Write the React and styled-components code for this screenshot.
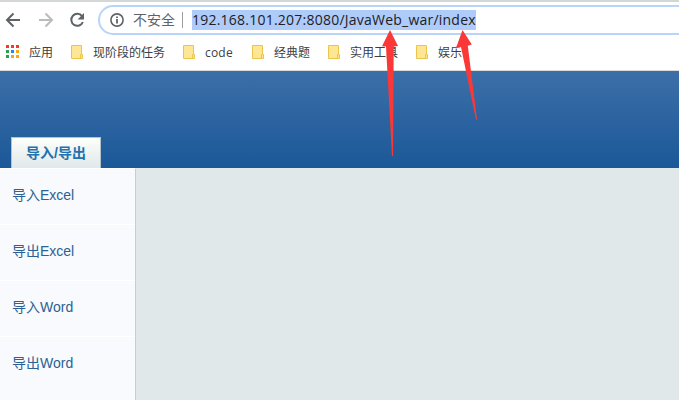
import React from "react";
import styled, { createGlobalStyle } from "styled-components";

const GlobalStyle = createGlobalStyle`
  * { box-sizing: border-box; }
  body { margin: 0; overflow: hidden; background: #fff; }
`;

const Window = styled.div`
  position: relative;
  width: 679px;
  height: 400px;
  display: flex;
  flex-direction: column;
  overflow: hidden;
  font-family: "Open Sans", "Noto Sans CJK SC", sans-serif;
`;

const TabStrip = styled.div`
  height: 2px;
  flex: none;
  background: #d3d7d5;
`;

const Toolbar = styled.div`
  height: 33px;
  flex: none;
  display: flex;
  padding: 3px 0 0 5px;
`;

const NavButton = styled.span`
  width: 16px;
  height: 30px;
  margin-right: ${(p) => p.$gap}px;
  display: flex;
  align-items: center;
  justify-content: center;
  flex: none;
  color: ${(p) => (p.$disabled ? "#bbbbbb" : "#5f6368")};
`;

const AddressBar = styled.div`
  width: 640px;
  height: 30px;
  flex: none;
  border: 2px solid #b8d4f8;
  border-radius: 15px;
  display: flex;
  align-items: center;
  padding-left: 10px;
`;

const Security = styled.span`
  width: 43px;
  margin-left: 9px;
  font-size: 14px;
  line-height: 20px;
  white-space: nowrap;
  color: #5f6368;
`;

const Divider = styled.span`
  width: 1px;
  height: 16px;
  margin: 0 9px 0 6px;
  background: #9b9da0;
`;

const Url = styled.span`
  width: 284px;
  height: 20px;
  background: #aecbfa;
  color: #202124;
  font-size: 14px;
  line-height: 20px;
  letter-spacing: 0.23px;
  white-space: nowrap;
`;

const Bookmarks = styled.div`
  height: 36px;
  flex: none;
  display: flex;
  gap: 18px;
  padding: 0 0 1px 6px;
  border-bottom: 1px solid #d7d9da;
`;

const Bookmark = styled.span`
  display: flex;
  align-items: center;
  gap: 10px;
  height: 34px;
  color: #3c4043;
  font-size: 12px;
  line-height: 18px;
  white-space: nowrap;
`;

const BookmarkLabel = styled.span`
  width: ${(p) => p.$width}px;
  padding-top: 2px;
  letter-spacing: ${(p) => p.$spacing || 0}px;
`;

const Banner = styled.header`
  height: 97px;
  flex: none;
  display: flex;
  align-items: flex-end;
  padding-left: 11px;
  background: linear-gradient(#3c6fa8, #1b5898);
`;

const MenuTab = styled.div`
  width: 90px;
  height: 31px;
  border: 1px solid #b4c3c9;
  border-bottom: 0;
  background: linear-gradient(#fdfffa, #e0e8ea);
  color: #2272ae;
  font: bold 14px/31px "Liberation Sans", "Noto Sans CJK SC", sans-serif;
  text-align: center;
`;

const Content = styled.main`
  flex: 1;
  display: flex;
  background: #e0e8ea;
`;

const Sidebar = styled.nav`
  width: 136px;
  border-top: 1px solid #fff;
  border-right: 1px solid #c5ced3;
  background: #f8fafd;
`;

const SidebarItem = styled.div`
  height: 56px;
  padding-left: 12px;
  border-bottom: ${(p) => (p.$last ? 0 : 1)}px solid #fff;
  color: #2b6293;
  font: 14px/53px "Liberation Sans", "Noto Sans CJK SC", sans-serif;
`;

const Annotations = styled.svg`
  position: absolute;
  left: 0;
  top: 0;
  pointer-events: none;
`;

const AppsSvg = styled.svg`
  margin-bottom: 2px;
`;

const BackIcon = () => (
  <svg width="16" height="16" viewBox="0 0 16 16" fill="none" stroke="currentColor" strokeWidth="2">
    <path d="M15 8H2.500M8.500 1.500L2 8l6.500 6.500" />
  </svg>
);

const ForwardIcon = () => (
  <svg width="16" height="16" viewBox="0 0 16 16" fill="none" stroke="currentColor" strokeWidth="2">
    <path d="M1 8h12.500M7.500 1.500L14 8l-6.500 6.500" />
  </svg>
);

const ReloadIcon = () => (
  <svg width="16" height="16" viewBox="0 0 16 16">
    <path d="M13.100 4.200A6 6 0 1 0 13.900 10" fill="none" stroke="currentColor" strokeWidth="2" />
    <path d="M15 1v6.400H8.600z" fill="currentColor" />
  </svg>
);

const InfoIcon = () => (
  <svg width="14" height="14" viewBox="0 0 14 14">
    <circle cx="7" cy="7" r="6.1" fill="none" stroke="#5f6368" strokeWidth="1.6" />
    <path d="M6.100 3.400h1.800V5H6.100zM6.100 6.100h1.800v4.500H6.100z" fill="#5f6368" />
  </svg>
);

const APP_DOTS = [
  "#f23a2f", "#f23a2f", "#f23a2f",
  "#27a052", "#2187f3", "#f9a70c",
  "#27a052", "#f9a70c", "#f9a70c",
];

const AppsIcon = () => (
  <AppsSvg width="13" height="13" shapeRendering="crispEdges">
    {APP_DOTS.map((c, i) => (
      <rect key={i} x={(i % 3) * 5} y={Math.floor(i / 3) * 5} width="3" height="3" fill={c} />
    ))}
  </AppsSvg>
);

const FolderIcon = () => (
  <svg width="12" height="14" viewBox="0 0 12 14">
    <path d="M.5.5h10v9h1v4H.5z" fill="#ffe694" stroke="#e9c64b" />
    <path d="M9.500 13V9.500h1" fill="none" stroke="#e9c64b" />
  </svg>
);

const FOLDERS = [
  { label: "现阶段的任务", width: 72 },
  { label: "code", width: 29, spacing: 0.2 },
  { label: "经典题", width: 36 },
  { label: "实用工具", width: 48 },
  { label: "娱乐", width: 24 },
];

const MENU = ["导入Excel", "导出Excel", "导入Word", "导出Word"];

export default function App() {
  return (
    <Window>
      <GlobalStyle />
      <TabStrip />
      <Toolbar>
        <NavButton $gap={17}><BackIcon /></NavButton>
        <NavButton $gap={15} $disabled><ForwardIcon /></NavButton>
        <NavButton $gap={13}><ReloadIcon /></NavButton>
        <AddressBar>
          <InfoIcon />
          <Security>不安全</Security>
          <Divider />
          <Url>192.168.101.207:8080/JavaWeb_war/index</Url>
        </AddressBar>
      </Toolbar>
      <Bookmarks>
        <Bookmark>
          <AppsIcon />
          <BookmarkLabel $width={24}>应用</BookmarkLabel>
        </Bookmark>
        {FOLDERS.map((f) => (
          <Bookmark key={f.label}>
            <FolderIcon />
            <BookmarkLabel $width={f.width} $spacing={f.spacing}>{f.label}</BookmarkLabel>
          </Bookmark>
        ))}
      </Bookmarks>
      <Banner>
        <MenuTab>导入/导出</MenuTab>
      </Banner>
      <Content>
        <Sidebar>
          {MENU.map((m, i) => (
            <SidebarItem key={m} $last={i === MENU.length - 1}>{m}</SidebarItem>
          ))}
        </Sidebar>
      </Content>
      <Annotations width="679" height="400" fill="#fb3838">
        <path d="M390 30l8 16-4.300.4L393 156h-1L386 46.400l-4-.2z" />
        <path d="M462.500 30l9.300 14.600-4 1.200L477 119.500l-1 .5L461 47l-5 1z" />
      </Annotations>
    </Window>
  );
}
